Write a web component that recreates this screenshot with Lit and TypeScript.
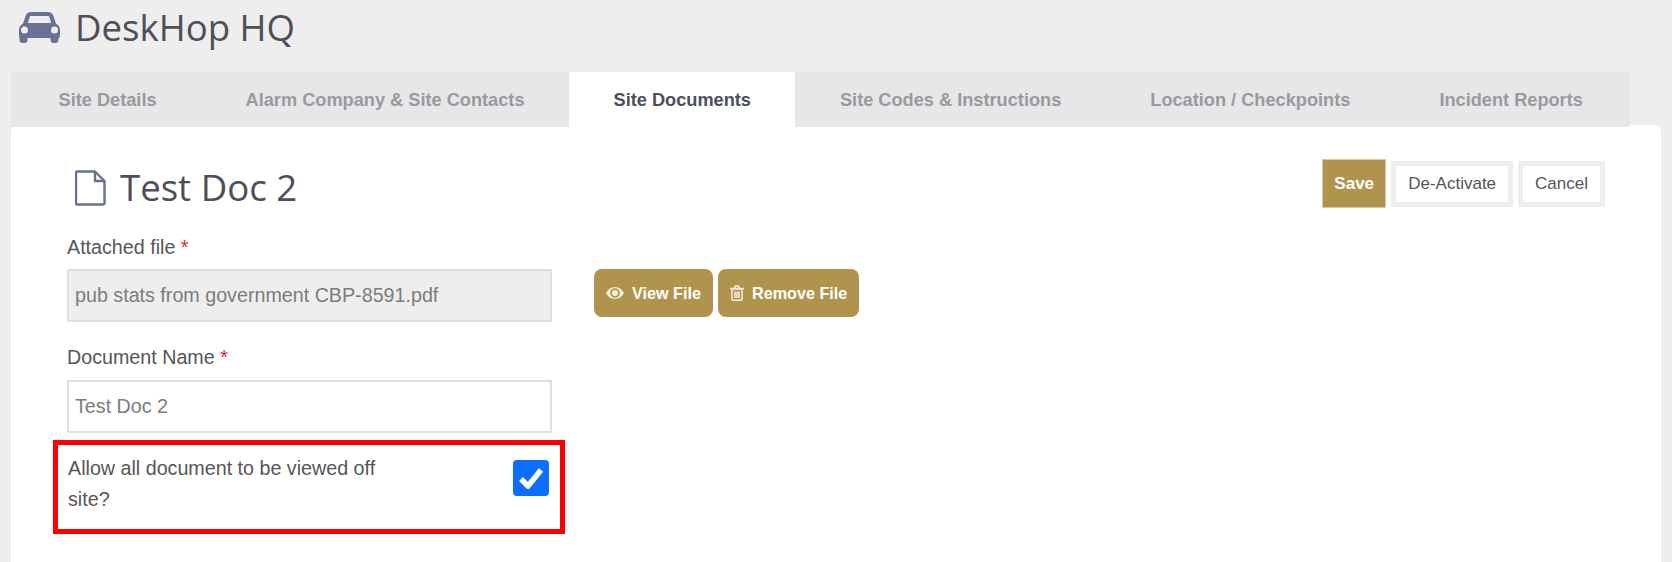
import { LitElement, html, css, svg } from "lit";
import { customElement } from "lit/decorators.js";

const TABS = ["Site Details", "Alarm Company & Site Contacts", "Site Documents", "Site Codes & Instructions", "Location / Checkpoints", "Incident Reports"];

@customElement("app-root")
export class AppRoot extends LitElement {
  static styles = css`
    :host { display: block; min-height: 562px; background: #eeeeee; font-family: "Liberation Sans", Arial, sans-serif; color: #55555b; overflow: hidden; }
    .brand { height: 72px; display: flex; align-items: flex-start; gap: 15px; padding: 11px 0 0 19px; box-sizing: border-box; }
    .brand svg { width: 41px; height: 32px; flex: none; }
    .brand span { font-family: "Open Sans", sans-serif; font-size: 36.6px; line-height: 32px; color: #4f4f57; }
    .tabs { position: relative; z-index: 1; display: flex; margin-left: 11px; padding-left: 3px; width: 1619px; box-sizing: border-box; height: 55px; background: #e7e7ea; }
    .tab { padding: 1px 44.5px 0; line-height: 55px; height: 55px; box-sizing: border-box; font-size: 18.2px; font-weight: 700; color: #9a9a9e; white-space: nowrap; }
    .tab.active { background: #fff; color: #4b4f5c; }
    .card { margin: -2px 11px 0 11px; min-height: 437px; box-sizing: border-box; padding: 34px 56px 0 56px; background: #fff; border-radius: 6px 6px 0 0; }
    .head { display: flex; justify-content: space-between; align-items: center; }
    .title { display: flex; align-items: center; gap: 14px; padding: 6px 0 0 8px; }
    .title svg { width: 31px; height: 36px; flex: none; margin-top: 2px; }
    .title span { font-family: "Open Sans", sans-serif; font-size: 36.6px; line-height: 40px; color: #4f4f57; }
    .actions { display: flex; align-items: center; gap: 5px; }
    .btn { box-sizing: border-box; height: 46px; border: 5px solid #eeeeee; background: #fff; font: 400 17px "Liberation Sans", Arial, sans-serif; color: #55555b; padding: 0 12px; }
    .btn.save { height: 49px; width: 64px; padding: 0; border: 1px solid #d9c9a0; background: #b0944d; color: #fff; font-weight: 700; }
    .row { display: flex; align-items: flex-start; margin-top: 25px; }
    .field { width: 485px; flex: none; }
    label { display: block; font-size: 19.7px; line-height: 28px; margin-bottom: 8px; }
    label i { font-style: normal; color: #e8242f; }
    input[type="text"] { display: block; width: 100%; height: 53px; box-sizing: border-box; border: 2px solid #e0e0e0; padding: 0 6px; font: 19.7px "Liberation Sans", Arial, sans-serif; color: #7c7c7c; background: #fff; outline: none; }
    input[type="text"]:disabled { background: #eeeeee; }
    .file-actions { display: flex; gap: 5px; margin: 36px 0 0 42px; }
    .pill { display: flex; align-items: center; gap: 8px; height: 48px; box-sizing: border-box; padding: 0 12px; border: 0; border-radius: 8px; background: #b0944d; color: #fff; font: 700 16.2px "Liberation Sans", Arial, sans-serif; }
    .pill svg { flex: none; }
    .doc-name { margin-top: 21px; }
    .doc-name label { margin-bottom: 9px; }
    .highlight { box-sizing: border-box; display: flex; justify-content: space-between; align-items: flex-start; width: 512px; height: 94px; margin: 7px 0 0 -14px; border: 5px solid #ff0000; padding: 8px 11px 0 10px; }
    .highlight p { margin: 0; width: 330px; font-size: 19.7px; line-height: 31px; }
    .check { width: 36px; height: 36px; margin-top: 7px; border-radius: 4px; background: #0d6efd; display: flex; align-items: center; justify-content: center; }
  `;

  render() {
    return html`
      <div class="brand">
        <svg viewBox="0 0 41 32"><path fill="#6b7196" fill-rule="evenodd" d="M12 1h17c2.600 0 4.300 1.200 5.200 3.600L37 12.400c2.400 1.400 4 3.600 4 6.600v5c0 1.600-.5 2.600-1.500 3.400V29c0 1.700-1.300 3-3 3h-2c-1.700 0-3-1.300-3-3v-2H8.500v2c0 1.700-1.300 3-3 3h-2c-1.700 0-3-1.300-3-3v-1.600C.5 26.600 0 25.600 0 24v-5c0-3 1.600-5.200 4-6.600l2.800-7.800C7.700 2.200 9.400 1 12 1zM12.500 5c-1 0-1.700.5-2 1.400L8.800 12h23.400l-1.700-5.600c-.3-.9-1-1.400-2-1.400zM5.500 15.500a3.500 3.500 0 1 0 0 7 3.500 3.500 0 0 0 0-7zM35.500 15.500a3.500 3.500 0 1 0 0 7 3.500 3.500 0 0 0 0-7z"/></svg>
        <span>DeskHop HQ</span>
      </div>
      <div class="tabs">
        ${TABS.map((t, i) => html`<div class="tab ${i === 2 ? "active" : ""}">${t}</div>`)}
      </div>
      <div class="card">
        <div class="head">
          <div class="title">
            <svg viewBox="0 0 31 36" fill="none" stroke="#66708f" stroke-width="2.400" stroke-linejoin="round"><path d="M2.200 1.500H20L29.500 11v22.300c0 .7-.5 1.200-1.200 1.200H2.200c-.7 0-1.200-.5-1.200-1.200V2.700c0-.7.5-1.200 1.200-1.200z"/><path d="M20 1.500V11h9.500"/></svg>
            <span>Test Doc 2</span>
          </div>
          <div class="actions">
            <button class="btn save">Save</button>
            <button class="btn">De-Activate</button>
            <button class="btn">Cancel</button>
          </div>
        </div>
        <div class="row">
          <div class="field">
            <label>Attached file <i>*</i></label>
            <input type="text" disabled value="pub stats from government CBP-8591.pdf" />
          </div>
          <div class="file-actions">
            <button class="pill">
              <svg width="18" height="12" viewBox="0 0 18 12">${svg`<path fill="#f4efe2" fill-rule="evenodd" d="M9 0c3.800 0 7 2.300 9 6-2 3.700-5.200 6-9 6S2 9.700 0 6c2-3.700 5.200-6 9-6zm0 1.200A4.800 4.800 0 1 0 9 10.800 4.800 4.800 0 0 0 9 1.200zM9 3a3 3 0 1 1 0 6 3 3 0 0 1 0-6z"/>`}</svg>
              View File
            </button>
            <button class="pill">
              <svg width="14" height="16" viewBox="0 0 14 16">${svg`<path fill="none" stroke="#f4efe2" stroke-width="1.500" d="M2 4h10v10.200c0 .6-.4 1-1 1H3c-.6 0-1-.4-1-1zM0 3.500h14M4.500 3.500l1-2.500h3l1 2.500M5 6.500v6.500M7 6.500v6.500M9 6.500v6.500"/>`}</svg>
              Remove File
            </button>
          </div>
        </div>
        <div class="field doc-name">
          <label>Document Name <i>*</i></label>
          <input type="text" value="Test Doc 2" />
        </div>
        <div class="highlight">
          <p>Allow all document to be viewed off site?</p>
          <div class="check">
            <svg width="26" height="22" viewBox="0 0 26 22"><path fill="none" stroke="#fff" stroke-width="5.500" d="M3 12l7 7L23 3"/></svg>
          </div>
        </div>
      </div>
    `;
  }
}
